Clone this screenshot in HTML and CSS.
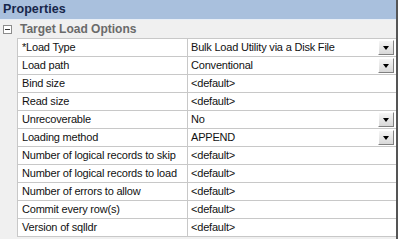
FILE: index.html
```html
<!DOCTYPE html>
<html>
<head>
<meta charset="utf-8">
<link rel="stylesheet" href="styles.css">
</head>
<body>
<div class="panel">
  <div class="title">Properties</div>
  <div class="category">
    <span class="toggle"><svg width="9" height="9" viewBox="0 0 9 9"><rect x="0.5" y="0.5" width="8" height="8" fill="#fff" stroke="#8c8c8c"/><line x1="2" y1="4.5" x2="7" y2="4.5" stroke="#333"/></svg></span>
    <span class="cat-label">Target Load Options</span>
  </div>
  <div class="grid">
    <div class="row"><div class="name">*Load Type</div><div class="value"><span>Bulk Load Utility via a Disk File</span><span class="drop"><i></i></span></div></div>
    <div class="row"><div class="name">Load path</div><div class="value"><span>Conventional</span><span class="drop"><i></i></span></div></div>
    <div class="row"><div class="name">Bind size</div><div class="value"><span>&lt;default&gt;</span></div></div>
    <div class="row"><div class="name">Read size</div><div class="value"><span>&lt;default&gt;</span></div></div>
    <div class="row"><div class="name">Unrecoverable</div><div class="value"><span>No</span><span class="drop"><i></i></span></div></div>
    <div class="row"><div class="name">Loading method</div><div class="value"><span>APPEND</span><span class="drop"><i></i></span></div></div>
    <div class="row"><div class="name">Number of logical records to skip</div><div class="value"><span>&lt;default&gt;</span></div></div>
    <div class="row"><div class="name">Number of logical records to load</div><div class="value"><span>&lt;default&gt;</span></div></div>
    <div class="row"><div class="name">Number of errors to allow</div><div class="value"><span>&lt;default&gt;</span></div></div>
    <div class="row"><div class="name">Commit every row(s)</div><div class="value"><span>&lt;default&gt;</span></div></div>
    <div class="row"><div class="name">Version of sqlldr</div><div class="value"><span>&lt;default&gt;</span></div></div>
  </div>
</div>
</body>
</html>
```
FILE: styles.css
```css
html, body {
  margin: 0;
  padding: 0;
  background: #fff;
}
.panel {
  width: 396px;
  height: 239px;
  overflow: hidden;
  border-right: 2px solid #555;
  background: #f0f0f0;
  font-family: "Liberation Sans", Arial, sans-serif;
  font-size: 11px;
  letter-spacing: -0.2px;
  color: #111;
}
.title {
  height: 19px;
  line-height: 19px;
  background: #a9c0dd;
  color: #16264a;
  font-weight: bold;
  font-size: 12.5px;
  letter-spacing: 0.1px;
  padding-left: 3px;
  border-bottom: 1px solid #e8eef6;
}
.category {
  height: 18px;
  display: flex;
  align-items: center;
  background: #f0f0f0;
}
.toggle {
  width: 9px;
  height: 9px;
  margin-left: 3px;
  margin-right: 8px;
  display: flex;
}
.cat-label {
  font-weight: bold;
  color: #6a6a6a;
  font-size: 12px;
  letter-spacing: 0;
}
.grid {
  margin-left: 17px;
  border-top: 1px solid #c8c8c8;
}
.row {
  display: flex;
  height: 17px;
  border-bottom: 1px solid #c8c8c8;
  background: #fff;
}
.name {
  width: 165px;
  padding-left: 4px;
  border-left: 1px solid #c8c8c8;
  border-right: 1px solid #c8c8c8;
  line-height: 17px;
  white-space: nowrap;
  overflow: hidden;
}
.value {
  flex: 1;
  display: flex;
  align-items: center;
  justify-content: space-between;
  padding-left: 3px;
  padding-right: 2px;
  line-height: 17px;
  white-space: nowrap;
}
.drop {
  width: 16px;
  height: 15px;
  background: linear-gradient(#f6f6f6, #d8d8d8);
  border: 1px solid;
  border-color: #fff #808080 #808080 #fff;
  box-sizing: border-box;
  display: flex;
  align-items: center;
  justify-content: center;
}
.drop i {
  width: 0;
  height: 0;
  border-left: 3.5px solid transparent;
  border-right: 3.5px solid transparent;
  border-top: 4px solid #000;
}
```
